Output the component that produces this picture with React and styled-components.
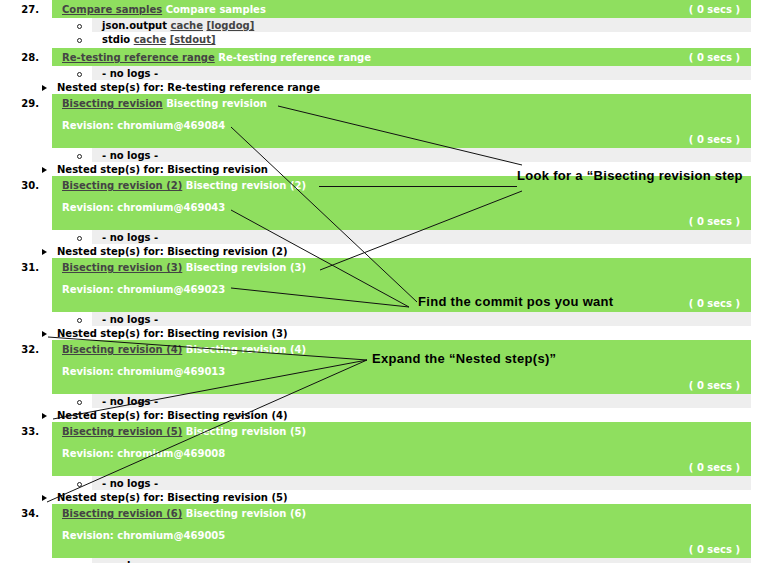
import styled, { createGlobalStyle } from "styled-components";

const GlobalStyle = createGlobalStyle`
  html, body {
    margin: 0;
    padding: 0;
    background: #fff;
    overflow: hidden;
  }
  body {
    font-family: "DejaVu Sans", Verdana, sans-serif;
    font-size: 10px;
    font-weight: bold;
    color: #000;
  }
`;

const STEPS = [
  {
    n: 27,
    title: "Compare samples",
    logs: [
      { name: "json.output", links: ["cache", "[logdog]"] },
      { name: "stdio", links: ["cache", "[stdout]"] },
    ],
    spaced: true,
  },
  { n: 28, title: "Re-testing reference range", nested: true },
  { n: 29, title: "Bisecting revision", rev: "469084", nested: true },
  { n: 30, title: "Bisecting revision (2)", rev: "469043", nested: true },
  { n: 31, title: "Bisecting revision (3)", rev: "469023", nested: true },
  { n: 32, title: "Bisecting revision (4)", rev: "469013", nested: true },
  { n: 33, title: "Bisecting revision (5)", rev: "469008", nested: true },
  { n: 34, title: "Bisecting revision (6)", rev: "469005", nested: true },
];

// annotation strokes drawn over the page
const LINES = [
  [278, 106, 522, 165],
  [319, 186.5, 517, 186.5],
  [320, 270, 522, 191],
  [231, 127, 417, 302],
  [231, 210, 409, 307],
  [231, 288, 409, 307],
  [48, 337, 367, 360],
  [53, 419, 367, 360],
  [47, 502, 367, 360],
];

const App = () => {
  return (
    <Page>
      <GlobalStyle />
      {STEPS.map((s) => (
        <Step key={s.n} $spaced={s.spaced}>
          <StepHead>
            <Num>{s.n}.</Num>
            <Result>
              <TitleLine>
                <span>
                  <a href="#">{s.title}</a> {s.title}
                </span>
                {!s.rev && <Secs>( 0 secs )</Secs>}
              </TitleLine>
              {s.rev && (
                <>
                  <Revision>Revision: chromium@{s.rev}</Revision>
                  <SecsRow>
                    <Secs>( 0 secs )</Secs>
                  </SecsRow>
                </>
              )}
            </Result>
          </StepHead>
          {(s.logs || [{ name: "- no logs -", links: [] }]).map((log, i) => (
            <LogRow key={i}>
              <BulletCell>
                <Bullet />
              </BulletCell>
              <LogBody $alt={i % 2 === 0}>
                {log.name}
                {log.links.map((l) => (
                  <span key={l}>
                    {" "}
                    <a href="#">{l}</a>
                  </span>
                ))}
              </LogBody>
            </LogRow>
          ))}
          {s.nested && (
            <Nested>
              <Arrow />
              Nested step(s) for: {s.title}
            </Nested>
          )}
        </Step>
      ))}

      <Overlay width="777" height="563" viewBox="0 0 777 563">
        {LINES.map(([x1, y1, x2, y2], i) => (
          <line key={i} x1={x1} y1={y1} x2={x2} y2={y2} stroke="#111" strokeWidth="1" />
        ))}
      </Overlay>
      <Note $x={517} $y={168}>Look for a “Bisecting revision step</Note>
      <Note $x={418} $y={294}>Find the commit pos you want</Note>
      <Note $x={372} $y={351}>Expand the “Nested step(s)”</Note>
    </Page>
  );
};

const Page = styled.div`
  position: relative;
  width: 751px;
  a {
    color: #444;
    text-decoration: underline;
  }
`;

const Step = styled.div`
  margin-bottom: ${(p) => (p.$spaced ? "2px" : "0")};
`;

const StepHead = styled.div`
  display: flex;
`;

const Num = styled.div`
  width: 39px;
  margin-right: 13px;
  text-align: right;
  padding-top: 4px;
  line-height: 12px;
`;

const Result = styled.div`
  flex: 1;
  background: #8fdf5f;
  color: #fff;
  padding: 4px 11px 2px 10px;
  line-height: 12px;
`;

const TitleLine = styled.div`
  display: flex;
  justify-content: space-between;
`;

const Revision = styled.div`
  margin-top: 10px;
`;

const SecsRow = styled.div`
  margin-top: 2px;
  text-align: right;
`;

const Secs = styled.span`
  white-space: pre;
`;

const LogRow = styled.div`
  display: flex;
  height: 14px;
  line-height: 13px;
`;

const BulletCell = styled.div`
  width: 92px;
  display: flex;
  align-items: center;
  padding-left: 77px;
  box-sizing: border-box;
`;

const Bullet = styled.span`
  width: 3px;
  height: 3px;
  border: 1px solid #222;
  border-radius: 50%;
  margin-top: 2px;
`;

const LogBody = styled.div`
  flex: 1;
  padding: 1px 0 0 10px;
  background: ${(p) => (p.$alt ? "#eeeeee" : "transparent")};
`;

const Nested = styled.div`
  display: flex;
  align-items: center;
  height: 14px;
  padding: 1px 0 0 42px;
  box-sizing: border-box;
  line-height: 13px;
`;

const Arrow = styled.span`
  width: 0;
  height: 0;
  border-left: 5px solid #000;
  border-top: 3px solid transparent;
  border-bottom: 3px solid transparent;
  margin-right: 10px;
`;

const Overlay = styled.svg`
  position: absolute;
  top: 0;
  left: 0;
  pointer-events: none;
`;

const Note = styled.div`
  position: absolute;
  left: ${(p) => p.$x}px;
  top: ${(p) => p.$y}px;
  font-family: "Liberation Sans", Arial, sans-serif;
  font-size: 13px;
  letter-spacing: 0.3px;
  line-height: 16px;
  white-space: nowrap;
  color: #000;
`;

export default App;
